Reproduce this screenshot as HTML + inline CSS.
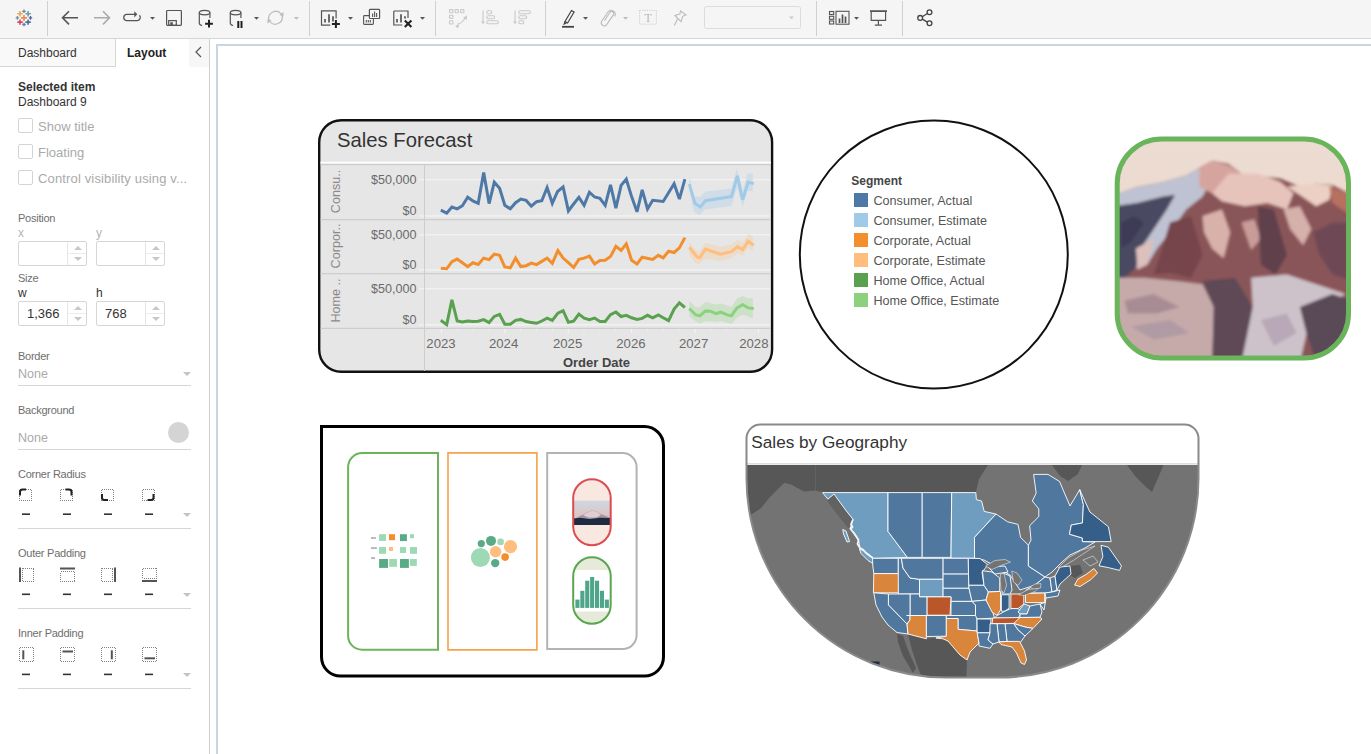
<!DOCTYPE html>
<html><head><meta charset="utf-8">
<style>
*{margin:0;padding:0;box-sizing:border-box}
html,body{width:1371px;height:754px;overflow:hidden;background:#fff;font-family:"Liberation Sans",sans-serif;color:#333}
.a{position:absolute}
#tb{left:0;top:0;width:1371px;height:38px;background:#f5f5f5}
#tbl{left:0;top:38px;width:1371px;height:1px;background:#d6d6d6;z-index:5}
.sep{position:absolute;top:1px;width:1px;height:35px;background:#d0d0d0}
#panel{left:0;top:38px;width:210px;height:716px;background:#fff;border-right:1px solid #cfcfcf}
.t{position:absolute;white-space:nowrap;line-height:1}
.cb{position:absolute;left:18px;width:15px;height:15px;border:1px solid #d4d4d4;border-radius:2px;background:#fff}
.lbl{font-size:11px;color:#6e6e6e;letter-spacing:-0.25px}
.inp{position:absolute;width:69px;height:25px;border:1px solid #d6d6d6;border-radius:2px;background:#fff}
.inp .sp{position:absolute;left:48px;top:0;width:1px;height:23px;background:#e6e6e6}
.inp .sh{position:absolute;left:49px;top:11px;width:18px;height:1px;background:#ececec}
.up{position:absolute;left:55px;top:4px;width:0;height:0;border-left:4px solid transparent;border-right:4px solid transparent;border-bottom:4px solid #c8c8c8}
.dn{position:absolute;left:55px;top:15px;width:0;height:0;border-left:4px solid transparent;border-right:4px solid transparent;border-top:4px solid #c8c8c8}
.ul{position:absolute;left:18px;width:173px;height:1px;background:#d6d6d6}
.dd{position:absolute;width:0;height:0;border-left:4px solid transparent;border-right:4px solid transparent;border-top:4px solid #c4c4c4}
.dash{position:absolute;width:8px;height:1.5px;background:#444}
.tdd{position:absolute;width:0;height:0;border-left:4px solid transparent;border-right:4px solid transparent;border-top:4px solid #555;top:16px}
</style></head><body>

<!-- TOOLBAR -->
<div id="tb" class="a">
<div class="sep" style="left:47px"></div><div class="sep" style="left:309px"></div><div class="sep" style="left:435px"></div><div class="sep" style="left:545px"></div><div class="sep" style="left:816px"></div><div class="sep" style="left:902px"></div><svg class="a" style="left:0;top:0" width="1371" height="38" viewBox="0 0 1371 38">
<g stroke-linecap="butt">
<!-- logo -->
<g stroke-width="1.6">
<path d="M24 14.9v6M21 17.9h6" stroke="#ee8a45"/>
<path d="M20 11.1v5.4M17.3 13.8h5.4" stroke="#eca84f"/>
<path d="M28.1 11.1v5.4M25.4 13.8h5.4" stroke="#6f9caa"/>
<path d="M20 19.4v5.4M17.3 22.1h5.4" stroke="#d9475e"/>
<path d="M28.1 19.4v5.4M25.4 22.1h5.4" stroke="#4a6d9c"/>
</g>
<g stroke-width="1.3">
<path d="M24 9.6v3.4M22.2 11.3h3.6" stroke="#5f8f9a"/>
<path d="M17.4 16.1v3.6M15.7 17.9h3.4" stroke="#6a97a4"/>
<path d="M30.5 16.1v3.6M28.8 17.9h3.4" stroke="#59609a"/>
<path d="M24 22.8v3.4M22.2 24.5h3.6" stroke="#6f7aaa"/>
</g>
<!-- back/forward -->
<path d="M62.5 17.8H78M69 11.2l-6.5 6.6 6.5 6.6" fill="none" stroke="#555" stroke-width="1.6"/>
<path d="M94 17.8h15.5M103 11.2l6.5 6.6-6.5 6.6" fill="none" stroke="#aaa" stroke-width="1.6"/>
<!-- loop -->
<path d="M135 14.3h-8.6a3.2 3.2 0 0 0 0 6.3h10.7a3.2 3.2 0 0 0 2.4-5.3" fill="none" stroke="#555" stroke-width="1.3"/>
<path d="M134.3 11.2l3 3.1-3 3.1z" fill="#555"/>
<path d="M150 17h5l-2.5 2.8z" fill="#555"/>
<!-- save -->
<rect x="166.6" y="10.5" width="14.8" height="14.8" rx="0.8" fill="none" stroke="#555" stroke-width="1.2"/>
<rect x="168.7" y="20.6" width="7.6" height="4.7" fill="none" stroke="#555" stroke-width="1.2"/>
<rect x="170.3" y="22.2" width="2.5" height="3.2" fill="#555"/>
<!-- cylinder + -->
<g fill="none" stroke="#555" stroke-width="1.2">
<ellipse cx="204.6" cy="12.6" rx="5.3" ry="2.3"/>
<path d="M199.3 12.6v10.6c0 1.2 1.2 2 2.8 2.3M209.9 12.6v5.5"/>
<ellipse cx="235.6" cy="12.6" rx="5.3" ry="2.3"/>
<path d="M230.3 12.6v10.6c0 1.2 1.2 2 2.8 2.3M240.9 12.6v5.5"/>
</g>
<path d="M209 19.8v7.8M205.1 23.7h7.8" stroke="#222" stroke-width="2"/>
<path d="M238.3 21v7M241.5 21v7" stroke="#222" stroke-width="2"/>
<path d="M254 17h5l-2.5 2.8z" fill="#555"/>
<!-- refresh -->
<g fill="none" stroke="#bbb" stroke-width="1.2">
<path d="M268.8 19.5a7 7 0 0 1 12.4-5.5"/>
<path d="M282.2 16a7 7 0 0 1-12.4 5.5"/>
</g>
<path d="M283.6 12l-0.2 4.6-4-1.6z M267.4 23.4l0.2-4.6 4 1.6z" fill="#bbb"/>
<path d="M293.8 17h5l-2.5 2.8z" fill="#bbb"/>
<!-- new sheet -->
<g fill="none" stroke="#555" stroke-width="1.2">
<path d="M336.1 18.5V10.9h-14.6v14.2h8.8"/>
<path d="M393.8 11h14.2v7M393.8 11v14h8.5" />
</g>
<path d="M325 19v3.6M329 14.2v8.4M333 16.2v5.4" stroke="#555" stroke-width="1.7"/>
<path d="M335.9 19.9v8M331.9 23.9h8" stroke="#222" stroke-width="2"/>
<path d="M348 17h5l-2.5 2.8z" fill="#555"/>
<path d="M366.3 20v2.6M368.3 20v2.6M370.3 20v2.6" stroke="#555" stroke-width="1.1"/>
<rect x="363.6" y="15.6" width="9.8" height="8.8" rx="0.8" fill="none" stroke="#555" stroke-width="1.1"/>
<rect x="369.4" y="9.4" width="10.2" height="9.1" rx="0.8" fill="#f5f5f5" stroke="#555" stroke-width="1.2"/>
<path d="M372.6 13.5v3.5M374.6 11.5v5.5M376.6 13v4" stroke="#555" stroke-width="1.1"/>
<path d="M397 19v3.6M401 14.2v8.4M405 16.2v2.2" stroke="#555" stroke-width="1.7"/>
<path d="M404.8 20.4l6.6 6.6M411.4 20.4l-6.6 6.6" stroke="#222" stroke-width="2.1"/>
<path d="M420 17h5l-2.5 2.8z" fill="#555"/>
<!-- swap -->
<g fill="none" stroke="#c9c9c9" stroke-width="1.1">
<rect x="449.5" y="9.6" width="3.4" height="3.2" rx="0.6"/>
<rect x="455" y="9.6" width="3.4" height="3.2" rx="0.6"/>
<rect x="460.5" y="9.6" width="3.4" height="3.2" rx="0.6"/>
<rect x="449.5" y="15.2" width="3.4" height="3.2" rx="0.6"/>
<rect x="449.5" y="20.8" width="3.4" height="3.2" rx="0.6"/>
<path d="M457 24.3c4 -1 7 -3.5 8.5 -7.2"/>
<!-- sort asc -->
<path d="M483 10.5v13"/>
<rect x="486.8" y="10.8" width="5" height="3" rx="1.2"/>
<rect x="486.8" y="15.8" width="7.8" height="3" rx="1.2"/>
<rect x="486.8" y="20.8" width="11.5" height="3" rx="1.2"/>
<path d="M515 10.5v13"/>
<rect x="518.8" y="10.8" width="11.5" height="3" rx="1.2"/>
<rect x="518.8" y="15.8" width="7.8" height="3" rx="1.2"/>
<rect x="518.8" y="20.8" width="5" height="3" rx="1.2"/>
</g>
<path d="M466.8 15.2l0.2 4.6-4-1.8z M455 25.8l4.4-1.3-1.6 3.9z" fill="#c9c9c9"/>
<path d="M481 21.5l2 2.6 2-2.6z M513 21.5l2 2.6 2-2.6z" fill="#c9c9c9"/>
<!-- highlighter -->
<g fill="none" stroke="#444" stroke-width="1.2">
<path d="M565 21.5l6.5-11 2.6 1.5-6.5 11z"/>
<path d="M565 21.5l-0.8 2.6 2.4-1.3"/>
</g>
<path d="M562 26.8h12" stroke="#444" stroke-width="1.8"/>
<path d="M583 17h5l-2.5 2.8z" fill="#555"/>
<!-- clip -->
<path d="M604.5 20.5l5.5-8.2a2.1 2.1 0 0 1 3.5 2.3l-6.8 10a3 3 0 0 1-5-3.3l6.3-9.3a4 4 0 0 1 6.6 4.5" fill="none" stroke="#bbb" stroke-width="1.1"/>
<path d="M623 17h5l-2.5 2.8z" fill="#bbb"/>
<!-- T -->
<rect x="639.6" y="10.4" width="16.8" height="13.8" fill="none" stroke="#ccc" stroke-width="1" stroke-dasharray="1.2 1.2"/>
<text x="648" y="22" font-family="Liberation Serif" font-size="12.5" fill="#bbb" text-anchor="middle">T</text>
<!-- pin -->
<g fill="none" stroke="#bbb" stroke-width="1.1">
<path d="M680.5 11l5.5 3.8-3.2 1.5-1.8 5.4-6-6.3 5-1.5z"/>
<path d="M677.6 18.8l-3.2 6.6"/>
</g>
<!-- dropdown box -->
<rect x="704.5" y="6.5" width="96" height="22" rx="2" fill="#f5f5f5" stroke="#dcdcdc" stroke-width="1"/>
<path d="M789 16.5h5l-2.5 2.8z" fill="#ccc"/>
<!-- cards -->
<g fill="none" stroke="#555" stroke-width="1.1">
<rect x="829.5" y="11.5" width="4.2" height="3"/>
<rect x="829.5" y="16.3" width="4.2" height="3"/>
<rect x="829.5" y="21" width="4.2" height="3"/>
<rect x="836" y="11.3" width="13" height="12.9"/>
</g>
<path d="M839.5 18.5v4.5M842.5 14.5v8.5M845.5 16.5v6.5" stroke="#555" stroke-width="1.7"/>
<path d="M854 17h5l-2.5 2.8z" fill="#555"/>
<!-- presentation -->
<g fill="none" stroke="#555" stroke-width="1.2">
<path d="M870 11.2h17"/>
<path d="M871.2 11.2v9.2h14.4v-9.2"/>
<path d="M878.4 20.4v4.6M874.8 25.1h7.2"/>
</g>
<path d="M870 11.2h17" stroke="#555" stroke-width="1.6"/>
<!-- share -->
<g fill="none" stroke="#444" stroke-width="1.3">
<circle cx="929.5" cy="12.3" r="2.4"/>
<circle cx="920.2" cy="17.9" r="2.4"/>
<circle cx="929.5" cy="23.2" r="2.4"/>
<path d="M922.3 16.7l5.1-3.2M922.3 19.1l5.1 3"/>
</g>
</g>
</svg>
</div>

<div id="tbl" class="a"></div>
<!-- LEFT PANEL -->
<div id="panel" class="a">
  <div class="a" style="left:0;top:0;width:116px;height:29px;background:#f9f9f9;border-right:1px solid #d6d6d6;border-bottom:1px solid #d6d6d6"></div>
  <div class="t" style="left:18px;top:9px;font-size:12px;color:#333">Dashboard</div>
  <div class="t" style="left:127px;top:9px;font-size:12px;font-weight:bold;color:#222">Layout</div>
  <div class="a" style="left:189px;top:0;width:20px;height:29px;background:#f7f7f7"></div>
  <svg class="a" style="left:194px;top:8px" width="10" height="12"><path d="M7 1 L2 6 L7 11" fill="none" stroke="#555" stroke-width="1.2"/></svg>

  <div class="t" style="left:18px;top:43px;font-size:12px;font-weight:bold;color:#333">Selected item</div>
  <div class="t" style="left:18px;top:58px;font-size:12px;color:#333">Dashboard 9</div>

  <div class="cb" style="top:80px"></div><div class="t" style="left:38px;top:82px;font-size:13px;color:#aaa">Show title</div>
  <div class="cb" style="top:106px"></div><div class="t" style="left:38px;top:108px;font-size:13px;color:#aaa">Floating</div>
  <div class="cb" style="top:132px"></div><div class="t" style="left:38px;top:134px;font-size:13px;color:#aaa;letter-spacing:0.15px">Control visibility using v...</div>

  <div class="t lbl" style="left:18px;top:175px">Position</div>
  <div class="t" style="left:18px;top:189px;font-size:12px;color:#b5b5b5">x</div>
  <div class="t" style="left:96px;top:189px;font-size:12px;color:#b5b5b5">y</div>
  <div class="inp" style="left:18px;top:203px"><div class="sp"></div><div class="sh"></div><div class="up"></div><div class="dn"></div></div>
  <div class="inp" style="left:96px;top:203px"><div class="sp"></div><div class="sh"></div><div class="up"></div><div class="dn"></div></div>

  <div class="t lbl" style="left:18px;top:235px">Size</div>
  <div class="t" style="left:18px;top:249px;font-size:12px;color:#333">w</div>
  <div class="t" style="left:96px;top:249px;font-size:12px;color:#333">h</div>
  <div class="inp" style="left:18px;top:263px"><div class="sp"></div><div class="sh"></div><div class="up"></div><div class="dn"></div><div class="t" style="left:8px;top:5px;font-size:13px;color:#333">1,366</div></div>
  <div class="inp" style="left:96px;top:263px"><div class="sp"></div><div class="sh"></div><div class="up"></div><div class="dn"></div><div class="t" style="left:8px;top:5px;font-size:13px;color:#333">768</div></div>

  <div class="t lbl" style="left:18px;top:313px">Border</div>
  <div class="t" style="left:18px;top:330px;font-size:12.5px;color:#aaa">None</div>
  <div class="dd" style="left:183px;top:334px"></div>
  <div class="ul" style="top:347px"></div>

  <div class="t lbl" style="left:18px;top:367px">Background</div>
  <div class="t" style="left:18px;top:394px;font-size:12.5px;color:#aaa">None</div>
  <div class="a" style="left:168px;top:384px;width:21px;height:21px;border-radius:50%;background:#d4d4d4"></div>
  <div class="ul" style="top:411px"></div>

  <div class="t lbl" style="left:18px;top:431px">Corner Radius</div>
  <div class="ul" style="top:490px"></div>
  <div class="dd" style="left:183px;top:475px"></div>

  <div class="t lbl" style="left:18px;top:510px">Outer Padding</div>
  <div class="ul" style="top:570px"></div>
  <div class="dd" style="left:183px;top:555px"></div>

  <div class="t lbl" style="left:18px;top:590px">Inner Padding</div>
  <div class="ul" style="top:650px"></div>
  <div class="dd" style="left:183px;top:635px"></div>
</div>

<!-- CANVAS -->
<div class="a" style="left:216px;top:44px;width:1160px;height:720px;border-left:2px solid #c9d5e0;border-top:2px solid #c9d5e0"></div>

<svg class="a" style="left:0;top:0" width="1371" height="754" viewBox="0 0 1371 754" font-family="Liberation Sans, sans-serif">
<rect x="19.5" y="489.0" width="11.5" height="11.5" stroke="#808080" stroke-width="1" stroke-dasharray="1 1" fill="none" shape-rendering="crispEdges"/>
<path d="M20 495.5V492.0Q20 489.5 22.5 489.5H26" fill="none" stroke="#222" stroke-width="2"/>
<rect x="60.5" y="489.0" width="11.5" height="11.5" stroke="#808080" stroke-width="1" stroke-dasharray="1 1" fill="none" shape-rendering="crispEdges"/>
<path d="M65.5 489.5H69.0Q71.5 489.5 71.5 492.0V495.5" fill="none" stroke="#222" stroke-width="2"/>
<rect x="101.5" y="489.0" width="11.5" height="11.5" stroke="#808080" stroke-width="1" stroke-dasharray="1 1" fill="none" shape-rendering="crispEdges"/>
<path d="M102 494.0V497.5Q102 500.0 104.5 500.0H108" fill="none" stroke="#222" stroke-width="2"/>
<rect x="142.5" y="489.0" width="11.5" height="11.5" stroke="#808080" stroke-width="1" stroke-dasharray="1 1" fill="none" shape-rendering="crispEdges"/>
<path d="M147.5 500.0H151.0Q153.5 500.0 153.5 497.5V494.0" fill="none" stroke="#222" stroke-width="2"/>
<rect x="22" y="513.4000000000001" width="8" height="1.6" fill="#333"/>
<rect x="63" y="513.4000000000001" width="8" height="1.6" fill="#333"/>
<rect x="104" y="513.4000000000001" width="8" height="1.6" fill="#333"/>
<rect x="145" y="513.4000000000001" width="8" height="1.6" fill="#333"/>
<rect x="22" y="593.5" width="8" height="1.6" fill="#333"/>
<rect x="63" y="593.5" width="8" height="1.6" fill="#333"/>
<rect x="104" y="593.5" width="8" height="1.6" fill="#333"/>
<rect x="145" y="593.5" width="8" height="1.6" fill="#333"/>
<rect x="22" y="673.6" width="8" height="1.6" fill="#333"/>
<rect x="63" y="673.6" width="8" height="1.6" fill="#333"/>
<rect x="104" y="673.6" width="8" height="1.6" fill="#333"/>
<rect x="145" y="673.6" width="8" height="1.6" fill="#333"/>
<rect x="22.5" y="568.0" width="11" height="13.5" stroke="#808080" stroke-width="1" stroke-dasharray="1 1" fill="none" shape-rendering="crispEdges"/><rect x="19" y="567.5" width="2" height="14.5" fill="#555"/>
<rect x="60.5" y="571.5" width="14" height="10" stroke="#808080" stroke-width="1" stroke-dasharray="1 1" fill="none" shape-rendering="crispEdges"/><rect x="60" y="567.5" width="15" height="2" fill="#555"/>
<rect x="101.5" y="568.0" width="11" height="13.5" stroke="#808080" stroke-width="1" stroke-dasharray="1 1" fill="none" shape-rendering="crispEdges"/><rect x="114" y="567.5" width="2" height="14.5" fill="#555"/>
<rect x="142.5" y="568.0" width="14" height="10" stroke="#808080" stroke-width="1" stroke-dasharray="1 1" fill="none" shape-rendering="crispEdges"/><rect x="142" y="580.0" width="15" height="2" fill="#555"/>
<rect x="19.5" y="647.8" width="14" height="13.8" stroke="#808080" stroke-width="1" stroke-dasharray="1 1" fill="none" shape-rendering="crispEdges"/>
<rect x="60.5" y="647.8" width="14" height="13.8" stroke="#808080" stroke-width="1" stroke-dasharray="1 1" fill="none" shape-rendering="crispEdges"/>
<rect x="101.5" y="647.8" width="14" height="13.8" stroke="#808080" stroke-width="1" stroke-dasharray="1 1" fill="none" shape-rendering="crispEdges"/>
<rect x="142.5" y="647.8" width="14" height="13.8" stroke="#808080" stroke-width="1" stroke-dasharray="1 1" fill="none" shape-rendering="crispEdges"/>
<rect x="22.3" y="650.3" width="2" height="9" fill="#555"/>
<rect x="62.5" y="650.5" width="10.5" height="2" fill="#555"/>
<rect x="110.8" y="650.3" width="2" height="9" fill="#555"/>
<rect x="144.5" y="657.3" width="10.5" height="2" fill="#555"/>
<path d="M341.2 120.2 H750.1 A22 22 0 0 1 772.1 142.2 V349.8 A22 22 0 0 1 750.1 371.8 H341.2 A22 22 0 0 1 319.2 349.8 V142.2 A22 22 0 0 1 341.2 120.2 Z" fill="#e6e6e6" stroke="#111" stroke-width="2.4"/>
<text x="337" y="147" font-size="20.3" fill="#333">Sales Forecast</text>
<rect x="320.4" y="161.8" width="450.6" height="1.6" fill="#fff"/>
<rect x="320.4" y="164.2" width="450.6" height="1" fill="#c8c8c8"/>
<rect x="320.4" y="219.2" width="450.6" height="1" fill="#c8c8c8"/>
<rect x="320.4" y="273.2" width="450.6" height="1" fill="#c8c8c8"/>
<rect x="320.4" y="327.8" width="450.6" height="1" fill="#c8c8c8"/>
<rect x="419" y="179.2" width="351" height="1.1" fill="#f6f6f6"/>
<rect x="419" y="215.4" width="351" height="1.1" fill="#f6f6f6"/>
<rect x="419" y="234.3" width="351" height="1.1" fill="#f6f6f6"/>
<rect x="419" y="269.3" width="351" height="1.1" fill="#f6f6f6"/>
<rect x="419" y="288.3" width="351" height="1.1" fill="#f6f6f6"/>
<rect x="419" y="324.3" width="351" height="1.1" fill="#f6f6f6"/>
<rect x="424" y="165" width="1" height="206" fill="#cdcdcd"/>
<rect x="440.9" y="329" width="1" height="4" fill="#f6f6f6"/>
<rect x="456.8" y="329" width="1" height="1.5" fill="#f6f6f6"/>
<rect x="472.6" y="329" width="1" height="1.5" fill="#f6f6f6"/>
<rect x="488.4" y="329" width="1" height="1.5" fill="#f6f6f6"/>
<rect x="504.3" y="329" width="1" height="4" fill="#f6f6f6"/>
<rect x="520.1" y="329" width="1" height="1.5" fill="#f6f6f6"/>
<rect x="536.0" y="329" width="1" height="1.5" fill="#f6f6f6"/>
<rect x="551.9" y="329" width="1" height="1.5" fill="#f6f6f6"/>
<rect x="567.7" y="329" width="1" height="4" fill="#f6f6f6"/>
<rect x="583.5" y="329" width="1" height="1.5" fill="#f6f6f6"/>
<rect x="599.4" y="329" width="1" height="1.5" fill="#f6f6f6"/>
<rect x="615.2" y="329" width="1" height="1.5" fill="#f6f6f6"/>
<rect x="631.1" y="329" width="1" height="4" fill="#f6f6f6"/>
<rect x="646.9" y="329" width="1" height="1.5" fill="#f6f6f6"/>
<rect x="662.8" y="329" width="1" height="1.5" fill="#f6f6f6"/>
<rect x="678.6" y="329" width="1" height="1.5" fill="#f6f6f6"/>
<rect x="694.5" y="329" width="1" height="4" fill="#f6f6f6"/>
<rect x="710.3" y="329" width="1" height="1.5" fill="#f6f6f6"/>
<rect x="726.2" y="329" width="1" height="1.5" fill="#f6f6f6"/>
<rect x="742.0" y="329" width="1" height="1.5" fill="#f6f6f6"/>
<rect x="757.9" y="329" width="1" height="4" fill="#f6f6f6"/>
<text x="416.5" y="184.3" font-size="12.6" fill="#6a6a6a" text-anchor="end">$50,000</text>
<text x="416.5" y="215.0" font-size="12.6" fill="#6a6a6a" text-anchor="end">$0</text>
<text x="416.5" y="238.5" font-size="12.6" fill="#6a6a6a" text-anchor="end">$50,000</text>
<text x="416.5" y="269.2" font-size="12.6" fill="#6a6a6a" text-anchor="end">$0</text>
<text x="416.5" y="292.9" font-size="12.6" fill="#6a6a6a" text-anchor="end">$50,000</text>
<text x="416.5" y="323.6" font-size="12.6" fill="#6a6a6a" text-anchor="end">$0</text>
<text x="0" y="0" transform="translate(340.3 191.5) rotate(-90)" font-size="12.6" fill="#8a8a8a" text-anchor="middle">Consu..</text>
<text x="0" y="0" transform="translate(340.3 246) rotate(-90)" font-size="12.6" fill="#8a8a8a" text-anchor="middle">Corpor..</text>
<text x="0" y="0" transform="translate(340.3 300.5) rotate(-90)" font-size="12.6" fill="#8a8a8a" text-anchor="middle">Home ..</text>
<text x="441" y="348" font-size="13.2" fill="#6a6a6a" text-anchor="middle">2023</text>
<text x="503.6" y="348" font-size="13.2" fill="#6a6a6a" text-anchor="middle">2024</text>
<text x="567.6" y="348" font-size="13.2" fill="#6a6a6a" text-anchor="middle">2025</text>
<text x="630.9" y="348" font-size="13.2" fill="#6a6a6a" text-anchor="middle">2026</text>
<text x="693.6" y="348" font-size="13.2" fill="#6a6a6a" text-anchor="middle">2027</text>
<text x="753.8" y="348" font-size="13.2" fill="#6a6a6a" text-anchor="middle">2028</text>
<text x="596.5" y="366.6" font-size="13" font-weight="bold" fill="#444" text-anchor="middle">Order Date</text>
<polygon points="689.3,176.1 694.2,196.0 699.8,197.2 705.4,191.6 731.4,188.5 737.0,168.0 742.6,191.0 747.5,173.6 752.8,173.6 752.8,191.6 747.5,191.0 742.6,207.1 737.0,187.3 731.4,205.9 705.4,209.6 699.8,215.2 694.2,212.1 689.3,189.8" fill="#d0dde7"/>
<polygon points="689.3,241.7 695.5,250.4 699.8,251.0 705.4,242.9 720.3,246.7 731.4,244.2 737.6,239.8 742.6,242.9 748.2,234.3 752.8,236.1 752.8,251.6 748.2,247.3 742.6,256.0 737.6,253.5 731.4,258.4 720.3,260.9 705.4,258.4 699.8,264.0 695.5,263.4 689.3,254.7" fill="#ecdccb"/>
<polygon points="689.3,301.0 695.5,307.0 699.8,307.5 705.4,302.0 715.9,304.5 720.9,303.5 731.4,307.0 737.0,298.6 742.6,296.1 748.2,298.6 752.8,297.9 752.8,318.4 748.2,316.5 742.6,314.7 737.0,317.8 731.4,324.0 720.9,320.9 715.9,321.9 705.4,320.9 699.8,323.6 695.5,320.9 689.3,316.5" fill="#cde0c8"/>
<polyline points="440.8,210.2 446.7,213.2 451.9,207.0 457.2,208.8 462.4,205.7 467.7,197.2 472.9,201.0 478.2,203.3 483.7,172.5 489.1,203.6 494.3,182.1 499.6,188.2 504.8,205.3 510.3,208.8 515.6,202.7 520.8,199.1 526.1,200.4 531.3,206.2 536.6,201.7 541.8,200.7 547.1,187.6 552.3,203.3 557.6,191.5 563.1,186.9 568.4,210.9 573.6,204.0 578.9,197.4 584.1,205.3 589.4,192.2 594.6,197.0 599.9,198.3 605.2,205.3 610.5,184.8 615.9,208.1 621.1,185.4 626.3,179.2 631.6,196.6 637.0,211.8 642.2,189.8 647.5,209.0 652.7,200.3 663.2,201.5 674.1,183.8 679.4,199.1 684.9,179.2" fill="none" stroke="#4e79a7" stroke-width="3" stroke-linejoin="miter" stroke-miterlimit="3"/>
<polyline points="440.8,268.3 446.7,268.8 451.9,261.7 457.2,259.1 462.4,262.7 467.7,266.6 472.9,262.7 478.2,264.4 483.7,258.1 489.1,259.6 494.3,254.1 499.6,255.2 504.8,267.0 510.3,267.9 515.6,258.1 520.8,266.6 526.1,265.7 531.3,263.1 536.6,264.6 541.8,261.4 547.1,258.1 552.3,263.3 557.9,250.5 563.1,258.1 568.4,262.7 573.6,267.5 578.9,259.4 584.1,258.1 589.4,256.1 594.6,264.0 599.9,260.4 605.2,260.3 610.5,256.6 615.9,246.3 621.1,250.4 626.3,243.8 631.6,260.3 637.0,264.0 642.2,257.2 652.7,259.4 658.3,255.3 663.2,257.8 668.6,251.2 674.1,252.5 679.4,247.9 684.9,237.6" fill="none" stroke="#f28e2b" stroke-width="3" stroke-linejoin="miter" stroke-miterlimit="3"/>
<polyline points="440.8,320.3 446.7,324.6 451.9,299.9 457.2,321.0 462.4,322.0 467.7,321.0 472.9,321.6 478.2,321.2 483.7,319.6 489.1,322.5 494.3,316.4 499.6,314.4 504.8,324.2 510.3,324.2 515.6,320.3 520.8,319.4 526.1,321.6 531.3,322.5 536.6,323.3 541.8,321.0 547.1,318.1 552.3,320.3 557.9,313.1 563.1,310.7 568.4,322.3 573.6,321.2 578.9,314.1 584.1,318.1 589.4,319.6 594.6,318.1 599.9,321.6 605.2,321.5 610.5,314.7 615.9,312.0 621.1,316.5 626.3,315.3 631.6,317.8 637.0,319.4 642.2,318.4 647.5,315.3 652.7,317.8 658.3,314.9 663.2,317.8 668.6,320.6 674.1,309.1 679.4,302.9 684.9,307.5" fill="none" stroke="#59a14f" stroke-width="3" stroke-linejoin="miter" stroke-miterlimit="3"/>
<polyline points="689.3,184.2 694.9,203.4 700.4,207.1 705.4,200.7 731.4,196.6 737.4,175.9 742.6,199.7 748.2,182.3 753.8,183.6" fill="none" stroke="#a0cbe8" stroke-width="3" stroke-linejoin="miter" stroke-miterlimit="3"/>
<polyline points="689.3,247.3 697.3,257.2 699.8,257.8 705.4,249.1 720.3,254.1 731.4,251.6 737.6,246.7 742.6,249.8 748.2,241.1 753.8,245.4" fill="none" stroke="#ffbe7d" stroke-width="3" stroke-linejoin="miter" stroke-miterlimit="3"/>
<polyline points="689.3,308.5 695.5,314.7 699.8,315.9 705.4,311.0 710.4,311.2 715.9,313.7 720.9,312.2 726.5,314.7 731.4,315.9 737.0,307.9 742.6,304.8 748.2,307.9 753.8,308.5" fill="none" stroke="#8cd17d" stroke-width="3" stroke-linejoin="miter" stroke-miterlimit="3"/>
<circle cx="933.8" cy="254.6" r="134" fill="#fff" stroke="#111" stroke-width="2"/>
<text x="851.3" y="185" font-size="12" font-weight="bold" fill="#444">Segment</text>
<rect x="854" y="193" width="14" height="14" fill="#4e79a7"/>
<text x="873.5" y="204.7" font-size="12.6" fill="#555">Consumer, Actual</text>
<rect x="854" y="213" width="14" height="14" fill="#a0cbe8"/>
<text x="873.5" y="224.7" font-size="12.6" fill="#555">Consumer, Estimate</text>
<rect x="854" y="233" width="14" height="14" fill="#f28e2b"/>
<text x="873.5" y="244.7" font-size="12.6" fill="#555">Corporate, Actual</text>
<rect x="854" y="253" width="14" height="14" fill="#ffbe7d"/>
<text x="873.5" y="264.7" font-size="12.6" fill="#555">Corporate, Estimate</text>
<rect x="854" y="273" width="14" height="14" fill="#59a14f"/>
<text x="873.5" y="284.7" font-size="12.6" fill="#555">Home Office, Actual</text>
<rect x="854" y="293" width="14" height="14" fill="#8cd17d"/>
<text x="873.5" y="304.7" font-size="12.6" fill="#555">Home Office, Estimate</text>
<defs><clipPath id="mclip"><rect x="1117" y="139" width="231.5" height="219" rx="44"/></clipPath>
<filter id="mblur" x="-5%" y="-5%" width="110%" height="110%"><feGaussianBlur stdDeviation="1.6"/></filter>
<linearGradient id="sky" x1="0" y1="0" x2="0" y2="1"><stop offset="0" stop-color="#ecdcd2"/><stop offset="1" stop-color="#efd6c8"/></linearGradient></defs>
<g clip-path="url(#mclip)">
<rect x="1115" y="135" width="240" height="230" fill="url(#sky)"/>
<g filter="url(#mblur)">
<polygon points="1114.7,194.9 1137.5,186.7 1163.5,181.9 1186.2,175.4 1212.2,160.7 1228.5,164.0 1241.5,173.7 1280.4,178.6 1299.9,186.7 1316.2,183.5 1332.4,185.1 1351.9,194.9 1351.9,362.2 1114.7,362.2" fill="#8a5558"/>
<polygon points="1114.7,194.9 1137.5,186.7 1163.5,181.9 1186.2,175.4 1212.2,160.7 1218.7,167.2 1202.5,196.5 1186.2,209.5 1170.0,232.2 1157.0,248.5 1147.2,264.7 1135.9,267.9 1140.7,248.5 1153.7,229.0 1166.7,209.5 1174.9,194.9 1163.5,196.5 1137.5,203.0 1114.7,206.2" fill="#bfc2d2"/>
<polygon points="1114.7,206.2 1137.5,203.0 1163.5,196.5 1174.9,194.9 1166.7,209.5 1153.7,229.0 1140.7,248.5 1135.9,267.9 1124.5,277.7 1114.7,277.7" fill="#4a4862"/>
<polygon points="1121.2,222.5 1134.2,216.0 1144.0,222.5 1131.0,242.0 1121.2,248.5" fill="#3c3b55"/>
<polygon points="1135.9,248.5 1153.7,238.7 1147.2,264.7 1137.5,269.6" fill="#dcc0bc"/>
<polygon points="1199.2,167.2 1212.2,160.7 1228.5,165.6 1241.5,173.7 1228.5,186.7 1212.2,193.2 1199.2,186.7" fill="#d6a49e"/>
<polygon points="1228.5,173.7 1257.7,173.7 1280.4,181.9 1293.4,193.2 1286.9,209.5 1267.4,203.0 1244.7,206.2 1222.0,201.3 1212.2,193.2" fill="#e6c4bc"/>
<polygon points="1286.9,186.7 1316.2,183.5 1332.4,186.1 1329.2,199.7 1316.2,206.2 1299.9,194.9" fill="#ecd0c4"/>
<polygon points="1329.2,186.7 1351.9,194.9 1351.9,216.0 1332.4,203.0" fill="#b87060"/>
<polygon points="1202.5,216.0 1222.0,209.5 1230.1,232.2 1223.6,258.2 1212.2,248.5 1204.1,232.2" fill="#d8b2aa"/>
<polygon points="1283.7,209.5 1299.9,206.2 1311.3,229.0 1303.2,245.2 1290.2,229.0" fill="#d6b0aa"/>
<polygon points="1241.5,222.5 1254.4,219.2 1260.9,238.7 1251.2,250.1" fill="#c89c98"/>
<polygon points="1170.0,222.5 1191.1,216.0 1202.5,255.0 1191.1,277.7 1170.0,272.8 1153.7,274.4 1160.2,255.0" fill="#74444c"/>
<polygon points="1257.7,206.2 1273.9,209.5 1286.9,255.0 1275.6,274.4 1260.9,264.7" fill="#5e404c"/>
<polygon points="1312.9,232.2 1332.4,222.5 1351.9,222.5 1351.9,280.9 1332.4,274.4 1319.4,255.0" fill="#6e4a54"/>
<polygon points="1114.7,277.7 1144.0,277.7 1176.5,280.9 1202.5,284.2 1213.8,306.9 1212.2,362.2 1114.7,362.2" fill="#c6aaaa"/>
<polygon points="1124.5,300.4 1153.7,293.9 1179.7,306.9 1157.0,313.4 1127.7,313.4" fill="#a88c94"/>
<polygon points="1131.0,326.4 1170.0,319.9 1189.5,332.9 1153.7,339.4" fill="#b09aa4"/>
<polygon points="1202.5,280.9 1235.0,277.7 1252.8,306.9 1243.1,362.2 1212.2,362.2 1213.8,306.9" fill="#5e4a56"/>
<polygon points="1251.2,277.7 1286.9,274.4 1316.2,284.2 1345.4,293.9 1332.4,302.1 1309.7,319.9 1299.9,362.2 1241.5,362.2 1252.8,306.9" fill="#cec2ca"/>
<polygon points="1299.9,306.9 1332.4,293.9 1351.9,300.4 1351.9,362.2 1316.2,362.2 1306.4,332.9" fill="#5a4856"/>
<polygon points="1260.9,319.9 1286.9,313.4 1296.7,332.9 1273.9,345.9" fill="#b8a8b8"/>
</g></g>
<rect x="1117.2" y="138.9" width="231.3" height="219.1" rx="44.5" fill="none" stroke="#6ab55b" stroke-width="5"/>
<path d="M321.5 426.5 H644.5 A19 19 0 0 1 663.5 445.5 V657.1 A19 19 0 0 1 644.5 676.1 H340.5 A19 19 0 0 1 321.5 657.1 V426.5 Z" fill="#fff" stroke="#000" stroke-width="3"/>
<path d="M362.1 453.1 H438 V649.7 H362.1 A14 14 0 0 1 348.1 635.7 V467.1 A14 14 0 0 1 362.1 453.1 Z" fill="#fff" stroke="#6ab55b" stroke-width="2"/>
<path d="M448 452.9 H536.9 V649.9 H448 V452.9 Z" fill="#fff" stroke="#f6a14c" stroke-width="1.6"/>
<path d="M547.2 453.1 H622.6 A14 14 0 0 1 636.6 467.1 V635.1 A14 14 0 0 1 622.6 649.1 H547.2 V453.1 Z" fill="#fff" stroke="#b3b3b3" stroke-width="2"/>
<rect x="371" y="537.1" width="4.9" height="1.8" fill="#b4b4b4"/>
<rect x="379.1" y="534.2" width="6.9" height="6.7" fill="#9dd9b4"/>
<rect x="389" y="534.2" width="6" height="6" fill="#f28e2b"/>
<rect x="400" y="534.2" width="6.9" height="6.9" fill="#59ab87"/>
<rect x="410" y="534.2" width="4" height="4" fill="#9dd9b4"/>
<rect x="371" y="547.2" width="5.9" height="1.8" fill="#b4b4b4"/>
<rect x="379.1" y="547" width="6.9" height="6.8" fill="#9dd9b4"/>
<rect x="389" y="547" width="4" height="4" fill="#ffbe7d"/>
<rect x="400" y="547" width="6" height="6" fill="#9dd9b4"/>
<rect x="410" y="547" width="7" height="6.8" fill="#9dd9b4"/>
<rect x="371" y="557.2" width="4" height="1.8" fill="#b4b4b4"/>
<rect x="379.1" y="559" width="8.9" height="8.9" fill="#59ab87"/>
<rect x="389.2" y="559" width="7.8" height="7.8" fill="#9dd9b4"/>
<rect x="400" y="559" width="8.9" height="8.9" fill="#59ab87"/>
<rect x="410" y="559" width="6.8" height="6.9" fill="#9dd9b4"/>
<circle cx="480.4" cy="557.5" r="9.5" fill="#9dd9b4"/>
<circle cx="481.3" cy="543.6" r="3.6" fill="#59ab87"/>
<circle cx="491" cy="540.9" r="5" fill="#59ab87"/>
<circle cx="500.6" cy="541.9" r="3.3" fill="#9dd9b4"/>
<circle cx="495.6" cy="551.8" r="5.7" fill="#ffbe7d"/>
<circle cx="510.5" cy="546.7" r="6.6" fill="#ffbe7d"/>
<circle cx="505.1" cy="557.1" r="3.8" fill="#f28e2b"/>
<circle cx="495.2" cy="563.1" r="4.2" fill="#59ab87"/>
<defs><clipPath id="rp"><rect x="573.2" y="479.3" width="37.5" height="66" rx="18.75"/></clipPath><linearGradient id="rsky" x1="0" y1="0" x2="0" y2="1"><stop offset="0" stop-color="#cdd7e3"/><stop offset="1" stop-color="#e6bcaa"/></linearGradient></defs>
<rect x="573.2" y="479.3" width="37.5" height="66" rx="18.75" fill="#f8e8e0"/>
<g clip-path="url(#rp)"><rect x="572" y="500.7" width="40" height="24.2" fill="url(#rsky)"/>
<polygon points="572.0,520.5 578.0,517.0 585.0,513.5 590.0,511.0 592.0,510.3 596.0,511.5 602.0,514.5 608.0,516.8 612.0,518.5 612.0,525.0 572.0,525.0" fill="#a894a8"/>
<polygon points="583.0,515.0 590.0,511.2 592.0,510.6 597.0,512.0 601.0,515.0 596.0,517.5 588.0,517.5" fill="#e2cdd2"/>
<polygon points="572.0,518.5 580.0,517.8 590.0,519.0 600.0,517.8 612.0,518.0 612.0,525.0 572.0,525.0" fill="#1e2b40"/>
</g>
<rect x="573.2" y="479.3" width="37.5" height="66" rx="18.75" fill="none" stroke="#de4b4f" stroke-width="2"/>
<rect x="573.2" y="557.3" width="37.5" height="66.5" rx="18.75" fill="#e6ebd9"/>
<rect x="574" y="570" width="36" height="41.5" fill="#fff"/>
<rect x="575.4" y="599.6" width="4.1" height="8.3" fill="#4fa58a"/>
<rect x="580.3" y="590.8" width="4.1" height="17.1" fill="#4fa58a"/>
<rect x="585.2" y="580.7" width="4.1" height="27.2" fill="#4fa58a"/>
<rect x="590.1" y="577" width="4.1" height="30.9" fill="#4fa58a"/>
<rect x="595" y="580.7" width="4.1" height="27.2" fill="#4fa58a"/>
<rect x="599.9" y="590.8" width="4.1" height="17.1" fill="#4fa58a"/>
<rect x="604.8" y="599.6" width="4.1" height="8.3" fill="#4fa58a"/>
<rect x="573.2" y="557.3" width="37.5" height="66.5" rx="18.75" fill="none" stroke="#5aa54f" stroke-width="2"/>
<defs><clipPath id="mapclip"><path d="M760.5 424.5 H1184.5 A14 14 0 0 1 1198.5 438.5 V478.2 A199.3 199.3 0 0 1 999.2 677.5 H945.9 A199.3 199.3 0 0 1 746.5 478.2 V438.5 A14 14 0 0 1 760.5 424.5 Z"/></clipPath></defs>
<path d="M760.5 424.5 H1184.5 A14 14 0 0 1 1198.5 438.5 V478.2 A199.3 199.3 0 0 1 999.2 677.5 H945.9 A199.3 199.3 0 0 1 746.5 478.2 V438.5 A14 14 0 0 1 760.5 424.5 Z" fill="#fff"/>
<g clip-path="url(#mapclip)">
<rect x="746" y="465" width="453" height="215" fill="#737373"/>
<polygon points="746.0,465.0 988.0,465.0 979.0,479.0 975.8,492.6 822.6,492.6 815.3,490.4 804.0,491.5 791.6,484.8 784.3,482.7 769.8,497.2 760.5,508.6 746.0,518.0" fill="#575757"/>
<polygon points="1052.0,465.0 1082.0,465.0 1078.0,474.0 1068.0,481.0 1060.0,476.0" fill="#575757"/>
<polygon points="1127.0,465.0 1163.5,465.0 1158.0,478.0 1152.0,492.0 1145.0,486.0 1135.0,476.0" fill="#575757"/>
<polygon points="908.0,634.0 926.4,638.8 946.2,636.5 948.0,641.0 955.7,650.0 960.0,655.0 967.0,660.0 966.0,684.0 925.0,684.0 918.0,668.0 912.0,650.0" fill="#575757"/>
<polygon points="897.0,633.5 903.0,636.0 908.0,650.0 916.0,668.0 913.0,673.0 903.0,656.0 898.0,642.0" fill="#575757"/>
<polygon points="1068.0,566.0 1080.0,565.0 1083.0,573.0 1075.0,578.0 1070.0,575.0" fill="#575757"/>
<polygon points="815.3,490.4 822.6,492.6 827.8,499.2 834.0,494.0 852.6,519.9 848.4,528.2 840.0,518.0 830.0,505.0 821.5,491.0" fill="#626262"/>
<g stroke="#fff" stroke-width="0.9" stroke-linejoin="round">
<polygon points="822.6,492.6 888.0,492.6 888.0,531.4 907.4,557.4 872.5,558.4 866.0,555.0 860.4,550.0 858.6,540.6 850.2,528.6 853.0,519.3 845.6,510.0 834.0,494.0 827.8,499.2" fill="#6f9dbf"/>
<polygon points="859.5,549.0 865.0,551.5 872.0,557.0 878.5,563.9 875.0,565.0 868.0,560.5 861.0,553.5" fill="#6f9dbf"/>
<polygon points="842.8,529.5 846.0,531.0 849.6,541.6 847.0,542.0 843.5,534.0" fill="#6f9dbf"/>
<polygon points="888.0,492.6 922.2,492.6 922.2,557.4 907.4,557.4 888.0,531.4" fill="#50789e"/>
<polygon points="922.2,492.6 951.7,492.6 951.0,557.4 922.2,557.4" fill="#50789e"/>
<polygon points="951.7,492.6 975.8,492.6 976.4,499.7 981.6,501.0 984.2,511.4 996.0,514.0 974.5,537.4 974.5,558.2 951.0,558.2" fill="#6f9dbf"/>
<polygon points="996.0,514.0 1007.6,521.8 1018.0,524.4 1020.6,537.4 1028.4,545.2 1028.4,566.0 1045.0,577.0 1035.0,585.0 1020.0,590.0 1010.0,575.0 995.0,566.0 984.0,560.0 974.5,558.2 974.5,537.4" fill="#50789e"/>
<polygon points="1033.6,474.4 1048.0,474.4 1059.6,481.5 1064.0,492.0 1070.0,506.0 1079.7,489.7 1083.4,504.5 1082.4,523.0 1071.3,525.0 1069.5,534.2 1082.4,538.0 1082.4,541.6 1095.0,542.0 1085.0,548.0 1070.0,555.0 1062.0,562.0 1052.0,572.0 1045.0,577.0 1028.4,566.0 1028.4,545.2 1031.0,540.0 1029.7,525.7 1038.8,516.6 1038.8,508.8 1032.3,501.0 1036.2,493.2" fill="#50789e"/>
<polygon points="1079.7,489.7 1089.9,512.0 1100.0,520.0 1108.4,526.8 1111.2,541.6 1082.4,541.6 1082.4,538.0 1069.5,534.2 1071.3,525.0 1082.4,523.0 1083.4,504.5" fill="#355f88"/>
<polygon points="1101.0,545.3 1108.4,547.2 1121.4,565.8 1119.6,570.4 1108.4,567.6 1099.0,565.8 1102.9,556.5" fill="#355f88"/>
<polygon points="1074.5,585.0 1078.0,579.0 1086.0,574.5 1094.0,568.5 1097.5,573.0 1091.0,579.5 1080.0,586.5" fill="#d9853b"/>
<polygon points="872.5,558.3 898.3,558.3 898.3,573.6 873.8,573.6 872.8,566.0" fill="#50789e"/>
<polygon points="873.8,573.6 898.3,573.6 900.0,580.0 898.3,592.8 873.4,592.8" fill="#d9853b"/>
<polygon points="898.3,558.3 901.4,558.3 903.0,568.0 910.0,578.0 919.5,579.3 919.5,594.0 898.3,594.0 898.3,574.1" fill="#50789e"/>
<polygon points="901.4,558.3 943.1,558.3 943.1,579.3 919.5,579.3 910.0,578.0 903.0,568.0" fill="#50789e"/>
<polygon points="919.5,579.3 943.1,579.3 943.1,596.9 919.5,596.9" fill="#6f9dbf"/>
<polygon points="943.1,558.3 968.3,558.3 968.5,574.1 943.1,574.1" fill="#50789e"/>
<polygon points="943.1,574.1 968.5,574.1 969.0,588.3 943.1,588.3" fill="#50789e"/>
<polygon points="943.1,588.3 969.0,588.3 972.0,601.4 951.0,601.4 951.0,596.9 943.1,596.9" fill="#50789e"/>
<polygon points="951.0,601.4 972.0,601.4 975.5,605.0 975.5,615.5 951.0,615.5" fill="#50789e"/>
<polygon points="946.2,615.5 977.0,615.5 977.0,631.0 958.0,629.3 958.0,618.5 946.2,618.5" fill="#50789e"/>
<polygon points="946.2,618.5 958.0,618.5 958.0,629.3 977.0,631.0 979.0,643.0 970.0,652.0 967.0,660.0 960.0,655.0 955.7,650.0 948.0,641.0 942.8,638.8 935.9,638.0 946.2,636.2" fill="#d9853b"/>
<polygon points="926.9,596.9 951.0,596.9 950.0,615.2 926.9,615.2" fill="#b9572b"/>
<polygon points="910.0,594.0 919.5,594.0 919.5,596.9 926.9,596.9 926.9,615.5 910.0,615.5" fill="#50789e"/>
<polygon points="888.4,594.0 910.0,594.0 910.0,620.0 907.0,624.0 888.4,605.0" fill="#50789e"/>
<polygon points="873.8,592.8 888.4,594.0 888.4,605.0 907.0,624.0 908.0,634.0 897.0,632.5 888.0,625.0 882.0,617.0 876.0,605.0" fill="#50789e"/>
<polygon points="906.6,615.5 926.4,615.5 926.4,638.8 908.0,634.0 907.0,624.0 910.0,620.0 910.0,615.5" fill="#d9853b"/>
<polygon points="926.4,615.5 946.2,615.5 946.2,636.2 926.4,636.5" fill="#50789e"/>
<polygon points="968.3,558.3 980.0,558.5 988.0,565.0 982.0,572.0 984.0,585.3 968.8,585.3 968.5,574.1" fill="#355f88"/>
<polygon points="968.8,585.3 984.0,585.3 988.4,592.0 986.0,600.0 972.0,601.4 969.0,588.3" fill="#50789e"/>
<polygon points="972.0,601.4 986.0,600.0 992.0,610.0 994.5,618.1 977.0,619.0 975.5,615.5 975.5,605.0" fill="#50789e"/>
<polygon points="977.0,619.0 991.0,619.0 990.0,632.8 977.2,632.8" fill="#355f88"/>
<polygon points="977.2,632.8 990.0,632.8 988.0,640.0 993.0,644.0 990.0,648.3 979.0,646.0 979.0,643.0" fill="#50789e"/>
<polygon points="982.4,570.7 992.0,572.0 999.7,578.0 999.7,591.4 988.4,592.0 984.0,585.3" fill="#50789e"/>
<polygon points="1003.0,573.0 1010.0,576.0 1012.0,590.0 1010.0,594.0 1002.0,594.0" fill="#50789e"/>
<polygon points="988.0,567.0 1005.0,566.0 1008.0,572.0 995.0,574.0" fill="#50789e"/>
<polygon points="988.4,592.0 1000.5,591.4 1000.5,610.0 997.0,615.5 992.0,612.0 986.0,600.0" fill="#d9853b"/>
<polygon points="1001.4,594.8 1009.1,594.8 1009.1,608.0 1005.0,611.2 1001.4,611.2" fill="#355f88"/>
<polygon points="1010.9,594.0 1023.8,594.0 1023.8,604.0 1018.0,608.6 1010.9,608.6" fill="#b9572b"/>
<polygon points="1026.0,590.0 1035.0,585.0 1045.0,577.0 1050.0,578.0 1052.0,592.0 1045.0,593.0 1026.0,593.0" fill="#50789e"/>
<polygon points="1025.5,593.5 1044.5,593.0 1045.0,602.6 1025.5,602.6" fill="#d9853b"/>
<polygon points="994.5,618.0 997.0,615.5 1005.0,611.2 1010.9,608.6 1018.0,608.6 1022.0,612.0 1018.0,618.0" fill="#50789e"/>
<polygon points="992.8,618.0 1020.0,617.5 1018.6,623.3 992.0,623.7" fill="#b9572b"/>
<polygon points="1018.0,612.0 1024.0,604.0 1030.0,606.0 1027.0,614.0 1020.0,614.0" fill="#6f9dbf"/>
<polygon points="1020.0,614.0 1027.0,614.0 1030.0,606.0 1040.0,604.0 1042.0,612.0 1040.0,617.3 1020.0,617.5" fill="#50789e"/>
<polygon points="1020.0,617.5 1040.0,617.3 1042.0,619.0 1033.0,628.4 1025.0,627.0 1013.6,623.5" fill="#d9853b"/>
<polygon points="1013.6,623.5 1025.0,627.0 1033.0,628.4 1025.0,636.0 1018.0,630.0" fill="#50789e"/>
<polygon points="1005.0,623.7 1013.6,623.5 1018.0,630.0 1025.0,636.0 1020.0,643.0 1007.0,641.4" fill="#50789e"/>
<polygon points="997.0,623.7 1005.0,623.7 1007.0,641.4 999.0,642.0" fill="#50789e"/>
<polygon points="990.0,623.7 997.0,623.7 999.0,642.0 993.0,644.0 988.0,640.0 990.0,632.8" fill="#50789e"/>
<polygon points="999.0,642.0 1007.0,641.4 1019.5,641.4 1021.0,644.0 1024.5,651.0 1026.5,660.0 1024.5,664.5 1021.0,663.0 1016.5,653.0 1012.0,647.0 1001.0,644.5" fill="#d9853b"/>
<polygon points="1050.0,578.0 1055.0,576.0 1057.0,590.0 1052.0,592.0" fill="#50789e"/>
<polygon points="1045.0,593.0 1052.0,592.0 1060.0,590.0 1058.0,596.0 1046.0,598.0" fill="#50789e"/>
<polygon points="1055.0,576.0 1060.0,567.0 1070.0,566.0 1071.0,574.0 1060.0,584.0 1057.0,590.0" fill="#355f88"/>
<polygon points="1045.0,598.0 1046.0,598.0 1044.0,610.0 1040.0,604.0 1045.0,602.6" fill="#50789e"/>
<polyline points="853,519.5 851,524 852.5,527 850.5,529 854,533 856,536 858.5,540 857.5,544 860,548 863,549.5 866,553 870,556 873,558" fill="none" stroke="#f4f4f4" stroke-width="1.8"/>
</g>
<g stroke="#e8e8e8" stroke-width="0.6">
<polygon points="985.5,566.0 995.0,560.5 1005.0,559.5 1010.5,562.0 1001.0,565.5 992.0,569.5" fill="#737373"/>
<polygon points="1000.5,574.0 1004.0,573.5 1006.6,585.0 1004.0,593.0 1001.0,590.0 1000.2,580.0" fill="#737373"/>
<polygon points="1011.7,571.0 1017.0,573.0 1022.0,580.0 1018.0,585.5 1013.5,582.0" fill="#737373"/>
<polygon points="1018.6,594.8 1027.0,590.0 1039.0,587.5 1035.0,591.5 1024.0,595.5" fill="#737373"/>
<polygon points="1030.0,587.0 1035.0,584.0 1041.0,583.6 1040.5,588.0 1033.0,589.0" fill="#737373"/>
<polygon points="1058.0,568.0 1068.0,558.0 1082.0,550.0 1095.0,546.0 1086.0,552.0 1074.0,560.0 1064.0,566.0" fill="#737373"/>
<polygon points="1083.0,560.0 1093.0,556.0 1098.0,562.0 1090.0,566.0" fill="#737373"/>
</g>
<rect x="871" y="661.5" width="8.5" height="4.5" fill="#1e2a45"/>
<rect x="815" y="465" width="0.8" height="26" fill="#666"/>
</g>
<rect x="747" y="463.2" width="451" height="1.3" fill="#d8d8d8"/>
<path d="M760.5 424.5 H1184.5 A14 14 0 0 1 1198.5 438.5 V478.2 A199.3 199.3 0 0 1 999.2 677.5 H945.9 A199.3 199.3 0 0 1 746.5 478.2 V438.5 A14 14 0 0 1 760.5 424.5 Z" fill="none" stroke="#8a8a8a" stroke-width="2"/>
<text x="751.3" y="447.5" font-size="17.2" fill="#333">Sales by Geography</text>
</svg>
</body></html>
